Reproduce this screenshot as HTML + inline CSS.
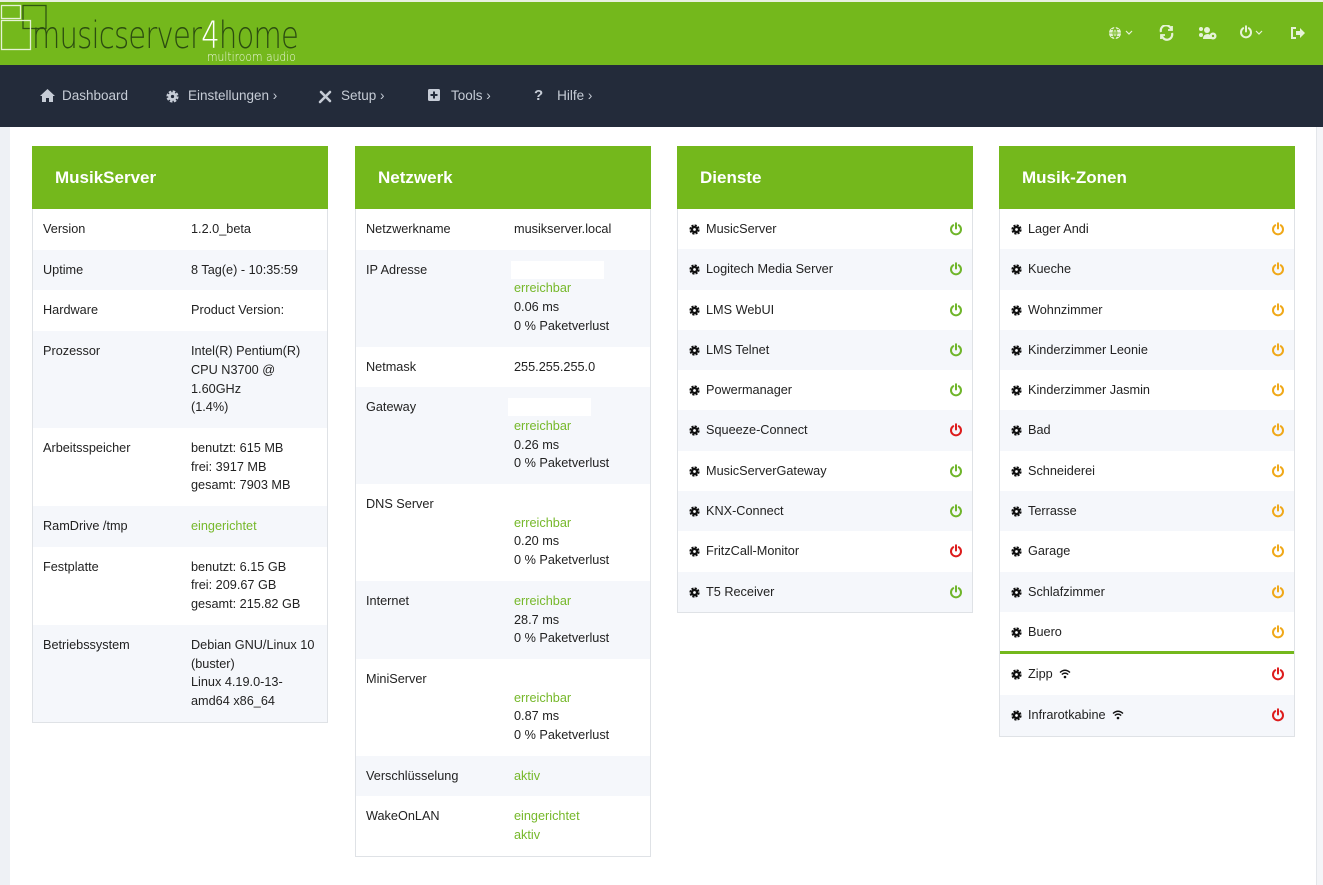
<!DOCTYPE html>
<html><head><meta charset="utf-8"><style>
*{box-sizing:border-box;margin:0;padding:0}
body{width:1323px;height:885px;overflow:hidden;background:#eef1f5;font-family:"Liberation Sans",Arial,sans-serif;font-size:12.7px;color:#222;position:relative}
.top{position:absolute;left:0;top:0;width:1323px;height:65px;background:#74b81c;border-top:2px solid #e8f0e0}
.nav{position:absolute;left:0;top:65px;width:1323px;height:62px;background:#232b3a}
.nav .it{position:absolute;top:23px;color:#c6ccd6;font-size:13.5px;line-height:16px}
.nav svg{position:absolute;top:0}
.main{position:absolute;left:10px;top:127px;width:1306px;height:758px;background:#fff}
.rb{position:absolute;left:1316px;top:127px;width:7px;height:758px;background:#f4f5f8;border-left:1px solid #e3e6ea}
.panel{position:absolute;top:146px;width:296px;background:#fff;border:1px solid #dfe2e6;border-top:none}
.ph{height:63px;background:#74b81c;color:#fff;font-weight:bold;font-size:17px;padding-left:23px;line-height:63px;margin:0 -1px}
.row{padding:11px 6px 11px 10px;line-height:18.7px;display:flex;position:relative}
.row:nth-child(odd){background:#f5f7fb}
.row .l{width:148px;flex:none}
.g{color:#76b82a}
.blank{display:inline-block;height:18px;background:#fff;vertical-align:top}
.svc{display:block;padding:11px 10px 11px 28px;line-height:18.3px}
.svc .ic{position:absolute;left:11px;top:15px}
.svc .pw{position:absolute;right:9px;top:13px}
.wifi{display:inline-block;margin-left:6px;vertical-align:-1px}
</style></head><body>
<svg width="0" height="0" style="position:absolute"><defs>
<symbol id="gear" viewBox="0 0 12 12"><circle cx="6" cy="6" r="4.3" fill="none" stroke="#111" stroke-width="2.6" stroke-dasharray="2.2 1.18"/><circle cx="6" cy="6" r="4" fill="#111"/><circle cx="6" cy="6" r="1.5" fill="#fff"/></symbol>
<symbol id="pw" viewBox="0 0 14 14"><path d="M4.2 3.2A5 5 0 1 0 9.8 3.2" fill="none" stroke="currentColor" stroke-width="2" stroke-linecap="round"/><path d="M7 1.2V6.5" stroke="currentColor" stroke-width="2" stroke-linecap="round"/></symbol>
<symbol id="wf" viewBox="0 0 12 10"><path d="M1 3.5Q6 -1 11 3.5M2.8 5.5Q6 2.7 9.2 5.5" fill="none" stroke="#111" stroke-width="1.4"/><circle cx="6" cy="8" r="1.3" fill="#111"/></symbol>
</defs></svg>

<div class="top">
<svg style="position:absolute;left:0;top:0" width="50" height="52"><rect x="1.5" y="3.5" width="19" height="13" fill="none" stroke="#e6f2d6" stroke-width="1.3"/><rect x="23" y="3.5" width="23" height="23" fill="none" stroke="#2f5512" stroke-width="1.3"/><rect x="1.5" y="18.5" width="29" height="29" fill="none" stroke="#e6f2d6" stroke-width="1.3"/></svg>
<div style="position:absolute;left:32px;top:14px;font-family:'DejaVu Sans',sans-serif;font-weight:200;font-size:37px;line-height:40px;color:#2c4d10;letter-spacing:-1px;transform:scaleX(0.785);transform-origin:left top;white-space:nowrap">musicserver<span style="color:#fff">4</span>home</div>
<div style="position:absolute;left:207px;top:49px;font-family:'DejaVu Sans',sans-serif;font-weight:200;font-size:12px;line-height:12px;color:#e8f4d8;transform:scaleX(0.9);transform-origin:left top">multiroom audio</div>
<svg style="position:absolute;left:1108px;top:24px" width="30" height="16" fill="#e7f3d8"><circle cx="7" cy="7" r="6"/><path d="M1 7h12M7 1v12M3 3.5h8M3 10.5h8M7 1Q3 7 7 13Q11 7 7 1" stroke="#74b81c" stroke-width="0.8" fill="none"/><path d="M18 5l3 3 3-3" stroke="#e7f3d8" fill="none" stroke-width="1.2"/></svg>
<svg style="position:absolute;left:1159px;top:23px" width="16" height="16" fill="none" stroke="#e7f3d8" stroke-width="2.2"><path d="M2 7A5 5 0 0 1 12 4M13 8A5 5 0 0 1 3 11"/><path d="M13 1v4h-4M2 14v-4h4" stroke-width="1.8"/></svg>
<svg style="position:absolute;left:1198px;top:24px" width="20" height="14" fill="#e7f3d8"><circle cx="3" cy="3" r="2"/><circle cx="3" cy="9" r="2"/><circle cx="9" cy="4" r="3"/><path d="M5 13Q5 8 10 8Q13 8 13 13z"/><circle cx="15" cy="10" r="3.5"/><circle cx="15" cy="10" r="1.2" fill="#74b81c"/></svg>
<svg style="position:absolute;left:1239px;top:23px;color:#e7f3d8" width="28" height="16"><use href="#pw" width="14" height="14"/><path d="M17 6l3 3 3-3" stroke="#e7f3d8" fill="none" stroke-width="1.2"/></svg>
<svg style="position:absolute;left:1291px;top:25px" width="14" height="12" fill="#e7f3d8"><path d="M5 1H1v10h4" fill="none" stroke="#e7f3d8" stroke-width="2"/><path d="M5 4h4V1l5 5-5 5V8H5z"/></svg>
</div>

<div class="nav">
<div class="it" style="left:40px"><svg width="15" height="13" style="left:0;top:1px" fill="#c6ccd6"><path d="M7.5 0L0 7h2v6h4V9h3v4h4V7h2z"/></svg><span style="margin-left:22px">Dashboard</span></div>
<div class="it" style="left:166px"><svg width="13" height="13" viewBox="0 0 12 12" style="left:0;top:2px"><circle cx="6" cy="6" r="4.3" fill="none" stroke="#c6ccd6" stroke-width="2.6" stroke-dasharray="2.2 1.18"/><circle cx="6" cy="6" r="4" fill="#c6ccd6"/><circle cx="6" cy="6" r="1.5" fill="#232b3a"/></svg><span style="margin-left:22px">Einstellungen ›</span></div>
<div class="it" style="left:318px"><svg width="15" height="15" style="left:0;top:1px" stroke="#c6ccd6" stroke-width="2.6" stroke-linecap="round"><path d="M2 13L12 3M3 3l9 9"/></svg><span style="margin-left:23px">Setup ›</span></div>
<div class="it" style="left:428px"><svg width="13" height="13" style="left:0;top:1px"><rect width="12" height="12" rx="1.5" fill="#c6ccd6"/><path d="M6 2.5v7M2.5 6h7" stroke="#232b3a" stroke-width="2"/></svg><span style="margin-left:23px">Tools ›</span></div>
<div class="it" style="left:534px"><span style="font-weight:bold;font-size:15px">?</span><span style="margin-left:14px">Hilfe ›</span></div>
</div>

<div class="main"></div><div class="rb"></div>

<div class="panel" style="left:32px"><div class="ph">MusikServer</div>
<div class="row"><div class="l">Version</div><div>1.2.0_beta</div></div>
<div class="row"><div class="l">Uptime</div><div>8 Tag(e) - 10:35:59</div></div>
<div class="row"><div class="l">Hardware</div><div>Product Version:</div></div>
<div class="row"><div class="l">Prozessor</div><div>Intel(R) Pentium(R)<br>CPU N3700 @<br>1.60GHz<br>(1.4%)</div></div>
<div class="row"><div class="l">Arbeitsspeicher</div><div>benutzt: 615 MB<br>frei: 3917 MB<br>gesamt: 7903 MB</div></div>
<div class="row"><div class="l">RamDrive /tmp</div><div class="g">eingerichtet</div></div>
<div class="row"><div class="l">Festplatte</div><div>benutzt: 6.15 GB<br>frei: 209.67 GB<br>gesamt: 215.82 GB</div></div>
<div class="row"><div class="l">Betriebssystem</div><div style="white-space:nowrap">Debian GNU/Linux 10<br>(buster)<br>Linux 4.19.0-13-<br>amd64 x86_64</div></div>
</div>

<div class="panel" style="left:355px"><div class="ph">Netzwerk</div>
<div class="row"><div class="l">Netzwerkname</div><div>musikserver.local</div></div>
<div class="row"><div class="l">IP Adresse</div><div><span class="blank" style="width:93px;margin-left:-3px"></span><br><span class="g">erreichbar</span><br>0.06 ms<br>0 % Paketverlust</div></div>
<div class="row"><div class="l">Netmask</div><div>255.255.255.0</div></div>
<div class="row"><div class="l">Gateway</div><div><span class="blank" style="width:83px;margin-left:-6px"></span><br><span class="g">erreichbar</span><br>0.26 ms<br>0 % Paketverlust</div></div>
<div class="row"><div class="l">DNS Server</div><div><br><span class="g">erreichbar</span><br>0.20 ms<br>0 % Paketverlust</div></div>
<div class="row"><div class="l">Internet</div><div><span class="g">erreichbar</span><br>28.7 ms<br>0 % Paketverlust</div></div>
<div class="row"><div class="l">MiniServer</div><div><br><span class="g">erreichbar</span><br>0.87 ms<br>0 % Paketverlust</div></div>
<div class="row"><div class="l">Verschlüsselung</div><div class="g">aktiv</div></div>
<div class="row"><div class="l">WakeOnLAN</div><div class="g">eingerichtet<br>aktiv</div></div>
</div>

<div class="panel" style="left:677px"><div class="ph">Dienste</div>
<div class="row svc"><svg class="ic" width="11" height="11"><use href="#gear"/></svg>MusicServer<svg class="pw" width="14" height="14" style="color:#6fb52a"><use href="#pw"/></svg></div>
<div class="row svc"><svg class="ic" width="11" height="11"><use href="#gear"/></svg>Logitech Media Server<svg class="pw" width="14" height="14" style="color:#6fb52a"><use href="#pw"/></svg></div>
<div class="row svc"><svg class="ic" width="11" height="11"><use href="#gear"/></svg>LMS WebUI<svg class="pw" width="14" height="14" style="color:#6fb52a"><use href="#pw"/></svg></div>
<div class="row svc"><svg class="ic" width="11" height="11"><use href="#gear"/></svg>LMS Telnet<svg class="pw" width="14" height="14" style="color:#6fb52a"><use href="#pw"/></svg></div>
<div class="row svc"><svg class="ic" width="11" height="11"><use href="#gear"/></svg>Powermanager<svg class="pw" width="14" height="14" style="color:#6fb52a"><use href="#pw"/></svg></div>
<div class="row svc"><svg class="ic" width="11" height="11"><use href="#gear"/></svg>Squeeze-Connect<svg class="pw" width="14" height="14" style="color:#dd1c1c"><use href="#pw"/></svg></div>
<div class="row svc"><svg class="ic" width="11" height="11"><use href="#gear"/></svg>MusicServerGateway<svg class="pw" width="14" height="14" style="color:#6fb52a"><use href="#pw"/></svg></div>
<div class="row svc"><svg class="ic" width="11" height="11"><use href="#gear"/></svg>KNX-Connect<svg class="pw" width="14" height="14" style="color:#6fb52a"><use href="#pw"/></svg></div>
<div class="row svc"><svg class="ic" width="11" height="11"><use href="#gear"/></svg>FritzCall-Monitor<svg class="pw" width="14" height="14" style="color:#dd1c1c"><use href="#pw"/></svg></div>
<div class="row svc"><svg class="ic" width="11" height="11"><use href="#gear"/></svg>T5 Receiver<svg class="pw" width="14" height="14" style="color:#6fb52a"><use href="#pw"/></svg></div>
</div>

<div class="panel" style="left:999px"><div class="ph">Musik-Zonen</div>
<div class="row svc"><svg class="ic" width="11" height="11"><use href="#gear"/></svg>Lager Andi<svg class="pw" width="14" height="14" style="color:#f0a818"><use href="#pw"/></svg></div>
<div class="row svc"><svg class="ic" width="11" height="11"><use href="#gear"/></svg>Kueche<svg class="pw" width="14" height="14" style="color:#f0a818"><use href="#pw"/></svg></div>
<div class="row svc"><svg class="ic" width="11" height="11"><use href="#gear"/></svg>Wohnzimmer<svg class="pw" width="14" height="14" style="color:#f0a818"><use href="#pw"/></svg></div>
<div class="row svc"><svg class="ic" width="11" height="11"><use href="#gear"/></svg>Kinderzimmer Leonie<svg class="pw" width="14" height="14" style="color:#f0a818"><use href="#pw"/></svg></div>
<div class="row svc"><svg class="ic" width="11" height="11"><use href="#gear"/></svg>Kinderzimmer Jasmin<svg class="pw" width="14" height="14" style="color:#f0a818"><use href="#pw"/></svg></div>
<div class="row svc"><svg class="ic" width="11" height="11"><use href="#gear"/></svg>Bad<svg class="pw" width="14" height="14" style="color:#f0a818"><use href="#pw"/></svg></div>
<div class="row svc"><svg class="ic" width="11" height="11"><use href="#gear"/></svg>Schneiderei<svg class="pw" width="14" height="14" style="color:#f0a818"><use href="#pw"/></svg></div>
<div class="row svc"><svg class="ic" width="11" height="11"><use href="#gear"/></svg>Terrasse<svg class="pw" width="14" height="14" style="color:#f0a818"><use href="#pw"/></svg></div>
<div class="row svc"><svg class="ic" width="11" height="11"><use href="#gear"/></svg>Garage<svg class="pw" width="14" height="14" style="color:#f0a818"><use href="#pw"/></svg></div>
<div class="row svc"><svg class="ic" width="11" height="11"><use href="#gear"/></svg>Schlafzimmer<svg class="pw" width="14" height="14" style="color:#f0a818"><use href="#pw"/></svg></div>
<div class="row svc" style="border-bottom:3px solid #74b81c;padding-bottom:10px"><svg class="ic" width="11" height="11"><use href="#gear"/></svg>Buero<svg class="pw" width="14" height="14" style="color:#f0a818"><use href="#pw"/></svg></div>
<div class="row svc" style="background:#fff"><svg class="ic" width="11" height="11"><use href="#gear"/></svg>Zipp<svg class="wifi" width="12" height="10"><use href="#wf"/></svg><svg class="pw" width="14" height="14" style="color:#dd1c1c"><use href="#pw"/></svg></div>
<div class="row svc" style="background:#f5f7fb;padding-bottom:12px"><svg class="ic" width="11" height="11"><use href="#gear"/></svg>Infrarotkabine<svg class="wifi" width="12" height="10"><use href="#wf"/></svg><svg class="pw" width="14" height="14" style="color:#dd1c1c"><use href="#pw"/></svg></div>
</div>
</body></html>
